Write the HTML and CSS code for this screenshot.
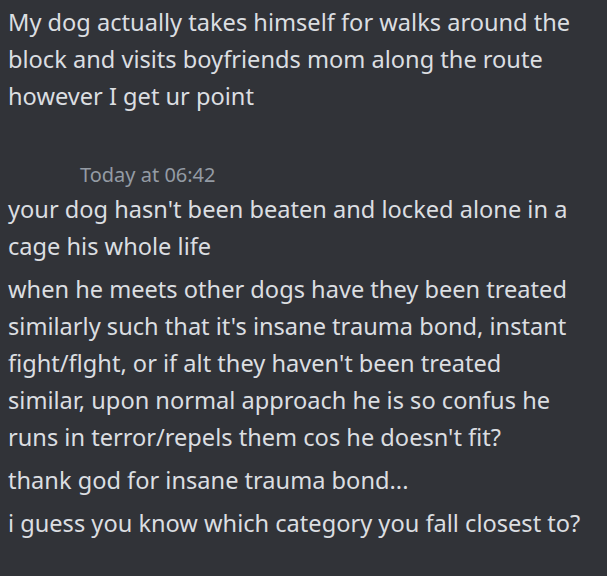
FILE: index.html
```html
<!DOCTYPE html>
<html>
<head>
<meta charset="utf-8">
<link rel="stylesheet" href="styles.css">
</head>
<body>
<div class="chat">
  <div class="msg">My dog actually takes himself for walks around the block and visits boyfriends mom along the route however I get ur point</div>
  <div class="group">
    <div class="header"><span class="time">Today at 06:42</span></div>
    <div class="msg">your dog hasn't been beaten and locked alone in a cage his whole life</div>
    <div class="msg">when he meets other dogs have they been treated similarly such that it's insane trauma bond, instant fight/flght, or if alt they haven't been treated similar, upon normal approach he is so confus he runs in terror/repels them cos he doesn't fit?</div>
    <div class="msg">thank god for insane trauma bond...</div>
    <div class="msg">i guess you know which category you fall closest to?</div>
  </div>
</div>
</body>
</html>
```
FILE: styles.css
```css
html, body {
  margin: 0;
  padding: 0;
  background: #313338;
}
.chat {
  width: 607px;
  height: 576px;
  box-sizing: border-box;
  padding: 4px 8px 0 8px;
  font-family: "Noto Sans", sans-serif;
  font-size: 23.6px;
  line-height: 37px;
  color: #dbdee1;
  overflow: hidden;
}
.msg {
  width: 574px;
  margin-bottom: 6px;
}
.group {
  margin-top: 41px;
}
.header {
  padding-left: 72px;
  height: 35px;
  line-height: 35px;
}
.time {
  font-size: 20px;
  color: #949ba4;
}
```
